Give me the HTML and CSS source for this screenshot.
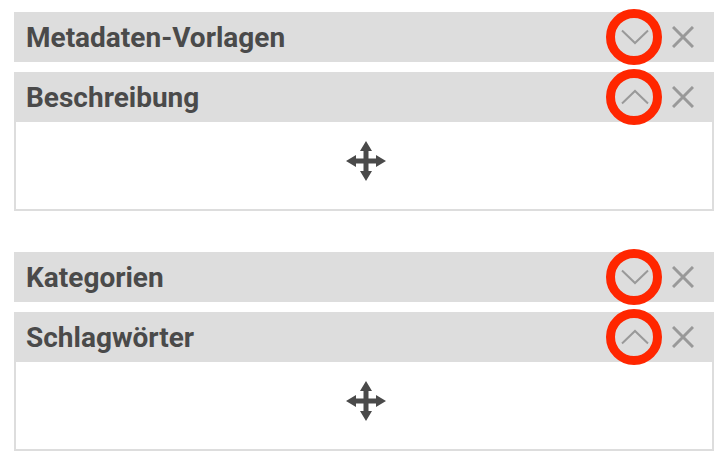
FILE: index.html
```
<!DOCTYPE html>
<html lang="de">
<head>
<meta charset="utf-8">
<title>Metadaten</title>
<link rel="stylesheet" href="styles.css">
</head>
<body>
<div class="page">
  <section class="group">
    <div class="panel">
      <div class="panel-head">
        <h2 class="panel-title">Metadaten-Vorlagen</h2>
        <div class="panel-tools">
          <span class="toggle marked">
            <svg width="28" height="16" viewBox="0 0 28 16"><polyline points="1,1.5 14,14 27,1.5" fill="none" stroke="#999" stroke-width="2"/></svg>
          </span>
          <span class="close">
            <svg width="22" height="22" viewBox="0 0 22 22"><path d="M1 1 L21 21 M21 1 L1 21" stroke="#999" stroke-width="3" fill="none"/></svg>
          </span>
        </div>
      </div>
    </div>
    <div class="panel">
      <div class="panel-head">
        <h2 class="panel-title">Beschreibung</h2>
        <div class="panel-tools">
          <span class="toggle marked">
            <svg width="28" height="16" viewBox="0 0 28 16"><polyline points="1,14.5 14,2 27,14.5" fill="none" stroke="#999" stroke-width="2"/></svg>
          </span>
          <span class="close">
            <svg width="22" height="22" viewBox="0 0 22 22"><path d="M1 1 L21 21 M21 1 L1 21" stroke="#999" stroke-width="3" fill="none"/></svg>
          </span>
        </div>
      </div>
      <div class="panel-body">
        <svg class="move" width="40" height="40" viewBox="0 0 40 40"><path fill="#4a4a4a" d="M20 0 L26 10 H22.5 V17.5 H30 V14 L40 20 L30 26 V22.5 H22.5 V30 H26 L20 40 L14 30 H17.5 V22.5 H10 V26 L0 20 L10 14 V17.5 H17.5 V10 H14 Z"/></svg>
      </div>
    </div>
  </section>
  <section class="group">
    <div class="panel">
      <div class="panel-head">
        <h2 class="panel-title">Kategorien</h2>
        <div class="panel-tools">
          <span class="toggle marked">
            <svg width="28" height="16" viewBox="0 0 28 16"><polyline points="1,1.5 14,14 27,1.5" fill="none" stroke="#999" stroke-width="2"/></svg>
          </span>
          <span class="close">
            <svg width="22" height="22" viewBox="0 0 22 22"><path d="M1 1 L21 21 M21 1 L1 21" stroke="#999" stroke-width="3" fill="none"/></svg>
          </span>
        </div>
      </div>
    </div>
    <div class="panel">
      <div class="panel-head">
        <h2 class="panel-title">Schlagwörter</h2>
        <div class="panel-tools">
          <span class="toggle marked">
            <svg width="28" height="16" viewBox="0 0 28 16"><polyline points="1,14.5 14,2 27,14.5" fill="none" stroke="#999" stroke-width="2"/></svg>
          </span>
          <span class="close">
            <svg width="22" height="22" viewBox="0 0 22 22"><path d="M1 1 L21 21 M21 1 L1 21" stroke="#999" stroke-width="3" fill="none"/></svg>
          </span>
        </div>
      </div>
      <div class="panel-body">
        <svg class="move" width="40" height="40" viewBox="0 0 40 40"><path fill="#4a4a4a" d="M20 0 L26 10 H22.5 V17.5 H30 V14 L40 20 L30 26 V22.5 H22.5 V30 H26 L20 40 L14 30 H17.5 V22.5 H10 V26 L0 20 L10 14 V17.5 H17.5 V10 H14 Z"/></svg>
      </div>
    </div>
  </section>
</div>
</body>
</html>
```

FILE: styles.css
```
html, body {
  margin: 0;
  padding: 0;
  background: #ffffff;
}

.page {
  width: 700px;
  padding: 12px 0 0 14px;
  display: flex;
  flex-direction: column;
  gap: 41px;
  font-family: Roboto, "Liberation Sans", Arial, sans-serif;
}

.group {
  display: flex;
  flex-direction: column;
  gap: 10px;
}

.panel-head {
  height: 50px;
  background: #dddddd;
  display: flex;
  align-items: center;
  padding: 0 20px 0 12px;
  box-sizing: border-box;
}

.panel-title {
  flex: 1;
  margin: 0;
  font-size: 28px;
  font-weight: 700;
  color: #4a4a4a;
  line-height: 33px;
}

.panel-tools {
  display: flex;
  align-items: center;
  gap: 22px;
}

.toggle {
  position: relative;
  width: 30px;
  height: 30px;
  display: flex;
  align-items: center;
  justify-content: center;
}

.toggle svg,
.close svg {
  display: block;
}

.toggle.marked::after {
  content: "";
  position: absolute;
  left: 50%;
  top: 50%;
  width: 38px;
  height: 38px;
  margin: -28px 0 0 -29px;
  border: 9px solid #ff2600;
  border-radius: 50%;
}

.close {
  width: 22px;
  height: 22px;
}

.panel-body {
  height: 87px;
  border: 2px solid #dddddd;
  border-top: none;
  display: flex;
  justify-content: center;
  align-items: flex-start;
}

.move {
  display: block;
  margin: 19px 0 0 4px;
}
```
